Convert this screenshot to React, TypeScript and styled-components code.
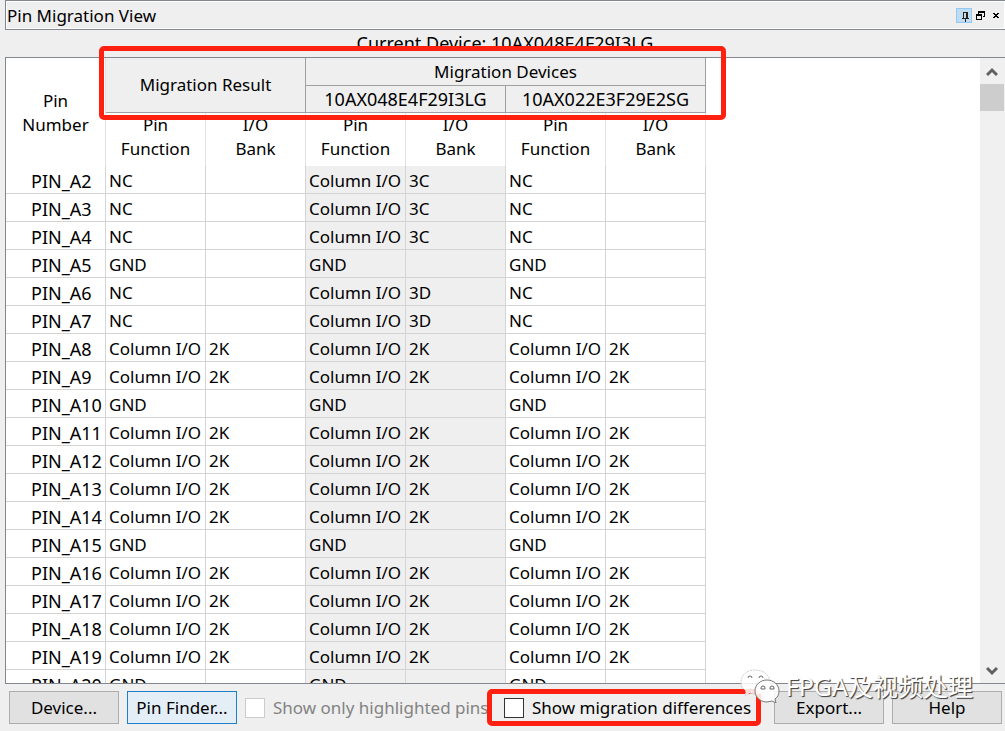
import React from "react";
import styled, { createGlobalStyle, css } from "styled-components";

const GlobalStyle = createGlobalStyle`
  *, *::before, *::after { box-sizing: border-box; }
  body {
    margin: 0;
    background: #efefef;
    color: #000;
    font-family: "Noto Sans", "Noto Sans CJK SC", sans-serif;
    font-size: 17px;
    line-height: 24px;
  }
  button, input { font: inherit; color: inherit; margin: 0; }
`;

const Window = styled.main`
  display: flex;
  flex-direction: column;
  height: 100vh;
  padding-left: 5px;
  overflow: hidden;
`;

const TitleBar = styled.header`
  display: flex;
  align-items: center;
  justify-content: space-between;
  flex: none;
  height: 30px;
  padding: 1px 1px 0 1px;
  border: 1px solid #828790;
  border-right: 0;
  box-shadow: inset 0 0 0 1px #fff;
`;

const Title = styled.h1`
  margin: 0;
  font-size: inherit;
  font-weight: 400;
`;

const TitleButtons = styled.div`
  display: flex;
`;

const TitleButton = styled.button<{ $active?: boolean }>`
  width: 16px;
  height: 15px;
  padding: 0;
  border: 1px solid ${(p) => (p.$active ? "#90c8f6" : "transparent")};
  background: ${(p) => (p.$active ? "#c0dcf3" : "transparent")};
  svg { display: block; }
`;

const CurrentDevice = styled.p`
  flex: none;
  height: 27px;
  margin: 0;
  padding-top: 1px;
  font-size: 18px;
  text-align: center;
`;

const Panel = styled.section`
  position: relative;
  flex: 1;
  min-height: 0;
  display: flex;
  border: 1px solid #828790;
  border-right: 0;
  background: #fff;
`;

const Viewport = styled.div`
  flex: 1;
  min-width: 0;
  overflow: hidden;
`;

const PinTable = styled.table`
  width: 700px;
  table-layout: fixed;
  border-collapse: separate;
  border-spacing: 0;
`;

const HeadCell = styled.th<{ $group?: boolean }>`
  padding: 0;
  font-weight: 400;
  border-right: 1px solid #e2e2e2;
  ${(p) =>
    p.$group &&
    css`
      height: 28px;
      background: #efefef;
      border-right-color: #a0a0a0;
      border-bottom: 1px solid #a0a0a0;
    `}
`;

const DeviceCell = styled(HeadCell)`
  height: 27px;
  font-size: 18px;
`;

const CornerCell = styled(HeadCell)`
  padding-top: 2px;
`;

const SubHeadCell = styled(HeadCell)`
  height: 53px;
  vertical-align: top;
`;

const Cell = styled.td<{ $shaded?: boolean }>`
  height: 28px;
  padding: 2px 0 0 3px;
  white-space: nowrap;
  border-right: 1px solid #d4d4d4;
  border-bottom: 1px solid #d4d4d4;
  background: ${(p) => (p.$shaded ? "#efefef" : "#fff")};
`;

const PinName = styled(Cell).attrs({ as: "th", scope: "row" })`
  padding-left: 25px;
  font-size: 18px;
  font-weight: 400;
  text-align: left;
`;

const ScrollTrack = styled.div`
  display: flex;
  flex-direction: column;
  flex: none;
  width: 25px;
  padding-right: 1px;
  background: #f0f0f0;
`;

const ScrollButton = styled.button`
  display: flex;
  align-items: center;
  justify-content: center;
  width: 24px;
  height: 26px;
  padding: 2px 0 0;
  border: 0;
  background: none;
`;

const ScrollThumb = styled.div`
  height: 27px;
  margin-bottom: auto;
  background: #cdcdcd;
`;

const Footer = styled.footer`
  position: relative;
  display: flex;
  align-items: center;
  flex: none;
  gap: 8px;
  height: 47px;
  padding: 0 3px 0 4px;
`;

const PushButton = styled.button<{ $hot?: boolean }>`
  flex: none;
  width: 110px;
  height: 33px;
  padding: 0;
  border: 1px solid ${(p) => (p.$hot ? "#1e80c8" : "#adadad")};
  background: ${(p) => (p.$hot ? "#e4eef7" : "#e1e1e1")};
`;

const CheckLabel = styled.label<{ $disabled?: boolean }>`
  position: relative;
  display: flex;
  align-items: center;
  flex: none;
  gap: 8px;
  width: ${(p) => (p.$disabled ? "251px" : "auto")};
  white-space: nowrap;
  color: ${(p) => (p.$disabled ? "#838383" : "#000")};
`;

const CheckBox = styled.input.attrs({ type: "checkbox" })`
  appearance: none;
  width: 20px;
  height: 20px;
  border: 1px solid #333;
  background: #fff;
  &:disabled { border-color: #ccc; }
`;

const Spacer = styled.div`
  flex: 1;
`;

const Highlight = styled.div`
  position: absolute;
  border: 5px solid #ff2010;
  border-radius: 5px;
  pointer-events: none;
`;

const HeaderHighlight = styled(Highlight)`
  top: -12px;
  left: 93px;
  width: 627px;
  height: 74px;
`;

const OptionHighlight = styled(Highlight)`
  inset: -7px -10px -6px -17px;
`;

const Watermark = styled.div`
  position: absolute;
  right: 32px;
  bottom: 25px;
  display: flex;
  align-items: center;
  gap: 6px;
  font-size: 25px;
  line-height: 40px;
  color: #fff;
  text-shadow: 1px 1px 1px #444, 1px 1px 0 #888;
  white-space: nowrap;
  pointer-events: none;
  svg { display: block; }
`;

const GND = "GND";
const NC = "NC";
const COL = "Column I/O";

type Pin = [name: string, fn: string, bank: string, currentFn?: string, currentBank?: string];

const pins: Pin[] = [
  ["PIN_A2", NC, "", COL, "3C"],
  ["PIN_A3", NC, "", COL, "3C"],
  ["PIN_A4", NC, "", COL, "3C"],
  ["PIN_A5", GND, ""],
  ["PIN_A6", NC, "", COL, "3D"],
  ["PIN_A7", NC, "", COL, "3D"],
  ["PIN_A8", COL, "2K"],
  ["PIN_A9", COL, "2K"],
  ["PIN_A10", GND, ""],
  ["PIN_A11", COL, "2K"],
  ["PIN_A12", COL, "2K"],
  ["PIN_A13", COL, "2K"],
  ["PIN_A14", COL, "2K"],
  ["PIN_A15", GND, ""],
  ["PIN_A16", COL, "2K"],
  ["PIN_A17", COL, "2K"],
  ["PIN_A18", COL, "2K"],
  ["PIN_A19", COL, "2K"],
  ["PIN_A20", GND, ""],
];

const Chevron = ({ down }: { down?: boolean }) => (
  <svg width="12" height="10" viewBox="0 0 12 10" fill="none" stroke="#606060" strokeWidth="3">
    <path d={down ? "M1 2l5 5 5-5" : "M1 8l5-5 5 5"} />
  </svg>
);

export default function App() {
  return (
    <Window>
      <GlobalStyle />
      <TitleBar>
        <Title>Pin Migration View</Title>
        <TitleButtons>
          <TitleButton $active aria-label="Pin panel">
            <svg width="14" height="13" viewBox="0 0 14 13" shapeRendering="crispEdges">
              <path d="M6 3h3v6H6z" fill="#d0d8e0" />
              <path d="M6 3h5v6h1v1H9v3H8v-3H5V9h1zM7 4v5h2V4z" fill="#222" fillRule="evenodd" />
            </svg>
          </TitleButton>
          <TitleButton aria-label="Float panel">
            <svg width="14" height="13" viewBox="0 0 14 13" shapeRendering="crispEdges">
              <path d="M5 2h7v2H5zM5 4h1v1H5zM11 4h1v4h-2V7h1zM3 5h6v2H3zM3 7h1v4H3zM8 7h1v4H8zM4 10h4v1H4z" />
            </svg>
          </TitleButton>
          <TitleButton aria-label="Close panel">
            <svg width="14" height="13" viewBox="0 0 14 13" shapeRendering="crispEdges">
              <path d="M4 4h2v1H4zM8 4h2v1H8zM5 5h4v1H5zM6 6h2v1H6zM5 7h4v1H5zM4 8h2v1H4zM8 8h2v1H8z" />
            </svg>
          </TitleButton>
        </TitleButtons>
      </TitleBar>
      <CurrentDevice>Current Device: 10AX048E4F29I3LG</CurrentDevice>
      <Panel>
        <Viewport>
          <PinTable>
            <thead>
              <tr>
                <CornerCell rowSpan={3}>Pin<br />Number</CornerCell>
                <HeadCell $group colSpan={2} rowSpan={2}>Migration Result</HeadCell>
                <HeadCell $group colSpan={4}>Migration Devices</HeadCell>
              </tr>
              <tr>
                <DeviceCell $group colSpan={2}>10AX048E4F29I3LG</DeviceCell>
                <DeviceCell $group colSpan={2}>10AX022E3F29E2SG</DeviceCell>
              </tr>
              <tr>
                {[0, 1, 2].map((i) => (
                  <React.Fragment key={i}>
                    <SubHeadCell>Pin<br />Function</SubHeadCell>
                    <SubHeadCell>I/O<br />Bank</SubHeadCell>
                  </React.Fragment>
                ))}
              </tr>
            </thead>
            <tbody>
              {pins.map(([name, fn, bank, currentFn = fn, currentBank = bank]) => (
                <tr key={name}>
                  <PinName>{name}</PinName>
                  <Cell>{fn}</Cell>
                  <Cell>{bank}</Cell>
                  <Cell $shaded>{currentFn}</Cell>
                  <Cell $shaded>{currentBank}</Cell>
                  <Cell>{fn}</Cell>
                  <Cell>{bank}</Cell>
                </tr>
              ))}
            </tbody>
          </PinTable>
        </Viewport>
        <ScrollTrack>
          <ScrollButton aria-label="Scroll up"><Chevron /></ScrollButton>
          <ScrollThumb />
          <ScrollButton aria-label="Scroll down"><Chevron down /></ScrollButton>
        </ScrollTrack>
        <HeaderHighlight />
      </Panel>
      <Footer>
        <PushButton>Device...</PushButton>
        <PushButton $hot>Pin Finder...</PushButton>
        <CheckLabel $disabled>
          <CheckBox disabled />
          Show only highlighted pins
        </CheckLabel>
        <CheckLabel>
          <CheckBox />
          Show migration differences
          <OptionHighlight />
        </CheckLabel>
        <Spacer />
        <PushButton>Export...</PushButton>
        <PushButton>Help</PushButton>
        <Watermark>
          <svg width="40" height="34" viewBox="0 0 40 34">
            <path d="M15 1C7 1 1 6 1 13c0 4 2 7 5 9l-1 5 5-3c2 1 4 1 6 1 8 0 14-5 14-12S23 1 15 1z" fill="#fff" fillOpacity="0.85" stroke="#ccc" strokeDasharray="2 1" />
            <path d="M27 11c-7 0-12 5-12 11s5 11 12 11l5-1 4 2-1-4c3-2 4-5 4-8 0-6-5-11-12-11z" fill="#fff" fillOpacity="0.85" stroke="#777" />
            <g fill="none" stroke="#666">
              <path d="M8 9a2 2 0 0 1 4 0M19 9a2 2 0 0 1 4 0" />
              <path d="M21 20v-1a2 2 0 0 1 4 0v1zM30 20v-1a2 2 0 0 1 4 0v1z" />
            </g>
          </svg>
          FPGA及视频处理
        </Watermark>
      </Footer>
    </Window>
  );
}
